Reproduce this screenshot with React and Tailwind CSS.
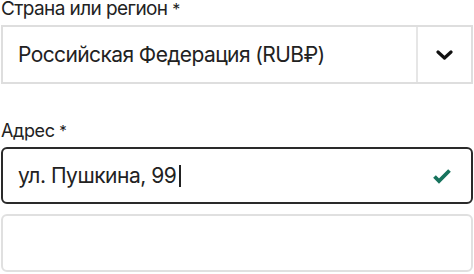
const font = { fontFamily: 'Inter, "Noto Sans", sans-serif' };

const App = () => {
  return (
    <div className="w-[474px] h-[274px] overflow-hidden bg-white text-[#222222]" style={font}>
      <div className="flex flex-col px-px">
        {/* Country */}
        <label className="text-[19px] leading-[18px] h-[17px] tracking-[-0.6px]">
          Страна или регион <span className="text-[16px] align-top">*</span>
        </label>
        <div className="mt-[8px] h-[59px] w-[472px] flex border-2 border-[#dedede] bg-white">
          <div className="flex-1 flex items-center pl-[15px] text-[21px] tracking-[-0.6px]">
            Российская Федерация (RUB₽)
          </div>
          <div className="w-[55px] flex items-center justify-center border-l-2 border-[#e6e6e6]">
            <svg className="w-[17px] h-[10px]" viewBox="0 0 17 10" fill="none">
              <path d="M2 2l6.5 6 6.5-6" stroke="#111" strokeWidth="3.2" strokeLinecap="round" strokeLinejoin="round" />
            </svg>
          </div>
        </div>

        {/* Address */}
        <label className="mt-[35px] text-[18px] leading-[24px] h-[24px] tracking-[-0.4px]">
          Адрес <span className="text-[15px] align-top">*</span>
        </label>
        <div className="mt-[4px] h-[57px] w-[472px] flex items-center border-2 border-[#2a2a2a] rounded-md pl-[15px] pr-[19px]">
          <span className="flex-1 text-[21px] tracking-[-0.5px] flex items-center">
            ул. Пушкина, 99
            <span className="inline-block w-[1.5px] h-[22px] bg-[#222] ml-[3px]"></span>
          </span>
          <svg className="w-[20px] h-[16px]" viewBox="0 0 20 16" fill="none">
            <path d="M2.5 8.5l4.5 4.5L17.5 2.5" stroke="#17735d" strokeWidth="3.8" strokeLinecap="butt" />
          </svg>
        </div>

        <div className="mt-[10px] h-[58px] w-[472px] border-2 border-[#e0e0e0] rounded-md"></div>
      </div>
    </div>
  );
};

export default App;
